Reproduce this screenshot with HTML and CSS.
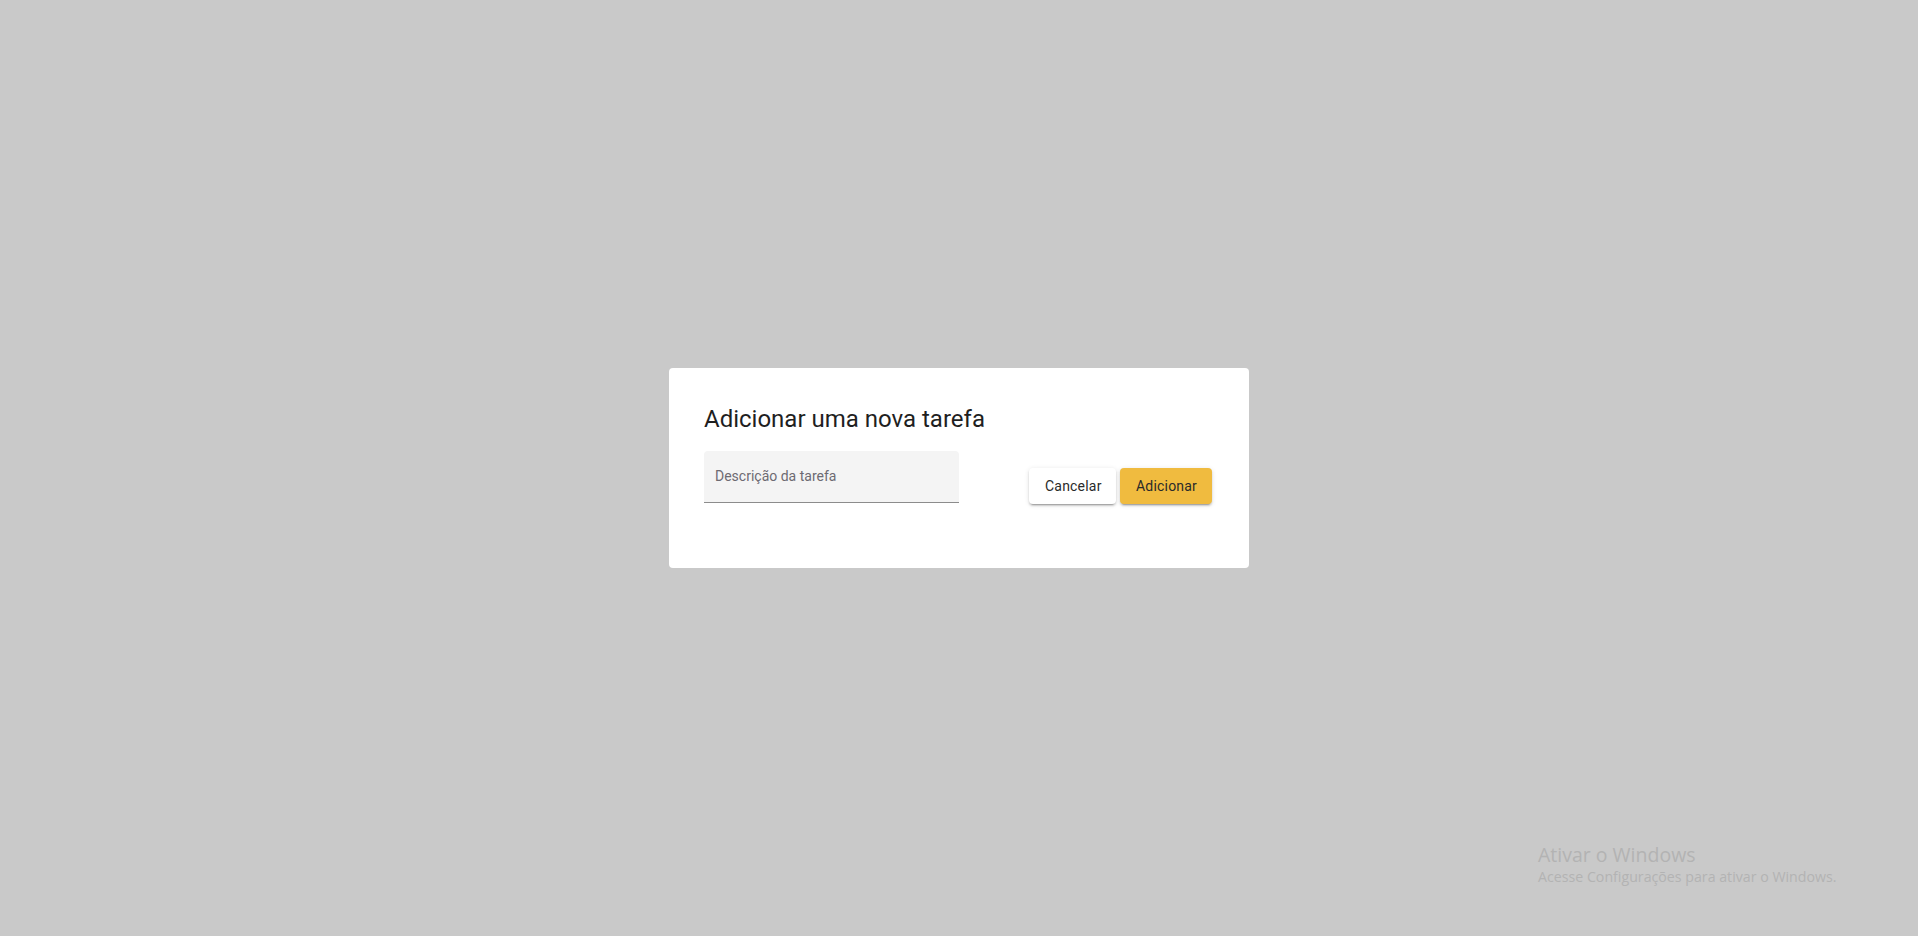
FILE: index.html
```html
<!DOCTYPE html>
<html lang="pt-BR">
<head>
<meta charset="utf-8">
<title>Adicionar tarefa</title>
<link rel="stylesheet" href="styles.css">
</head>
<body>
<div class="backdrop">
  <div class="dialog">
    <h1 class="dialog-title">Adicionar uma nova tarefa</h1>
    <div class="dialog-row">
      <label class="field">
        <input class="field-input" type="text" placeholder="Descrição da tarefa">
      </label>
      <div class="actions">
        <button class="btn btn-cancel">Cancelar</button>
        <button class="btn btn-primary">Adicionar</button>
      </div>
    </div>
  </div>
</div>
<div class="watermark">
  <div class="wm-title">Ativar o Windows</div>
  <div class="wm-sub">Acesse Configurações para ativar o Windows.</div>
</div>
</body>
</html>
```

FILE: styles.css
```css
html, body {
  margin: 0;
  padding: 0;
  height: 100%;
}
body {
  background: #c9c9c9;
  font-family: Roboto, "Helvetica Neue", Arial, sans-serif;
  overflow: hidden;
}
.backdrop {
  height: 100%;
  display: flex;
  align-items: center;
  justify-content: center;
}
.dialog {
  width: 580px;
  height: 200px;
  box-sizing: border-box;
  background: #ffffff;
  border-radius: 4px;
  padding: 35px 37px 0 35px;
}
.dialog-title {
  margin: 0;
  font-size: 24px;
  font-weight: 400;
  line-height: 32px;
  color: #1f1f1f;
}
.dialog-row {
  margin-top: 16px;
  display: flex;
  align-items: flex-start;
  justify-content: space-between;
}
.field {
  display: block;
  width: 255px;
  height: 52px;
  box-sizing: border-box;
  background: #f4f4f4;
  border-radius: 4px 4px 0 0;
  border-bottom: 1px solid #8c8c8c;
}
.field-input {
  width: 100%;
  height: 100%;
  box-sizing: border-box;
  border: 0;
  outline: none;
  background: transparent;
  padding: 0 11px 1px 11px;
  font-family: Roboto, Arial, sans-serif;
  font-size: 14px;
  color: #333;
}
.field-input::placeholder {
  color: #6d6a72;
}
.actions {
  margin-top: 17px;
  display: flex;
  gap: 4px;
}
.btn {
  height: 36px;
  border: 0;
  border-radius: 4px;
  padding: 0 16px 1px;
  font-family: Roboto, Arial, sans-serif;
  font-size: 14px;
  font-weight: 400;
  letter-spacing: 0.2px;
  color: #2a2a2a;
  box-shadow: 0 3px 1px -2px rgba(0,0,0,.2), 0 2px 2px 0 rgba(0,0,0,.14), 0 1px 5px 0 rgba(0,0,0,.12);
  cursor: pointer;
}
.btn-cancel {
  background: #ffffff;
  width: 87px;
}
.btn-primary {
  background: #f0bb3f;
  width: 92px;
}
.watermark {
  position: absolute;
  left: 1538px;
  top: 842px;
  font-family: "Open Sans", "Noto Sans", sans-serif;
  color: #b3b3b3;
}
.wm-title {
  font-size: 19.5px;
  line-height: 26px;
}
.wm-sub {
  font-size: 14.2px;
  line-height: 18px;
  margin-top: 0;
}
```
